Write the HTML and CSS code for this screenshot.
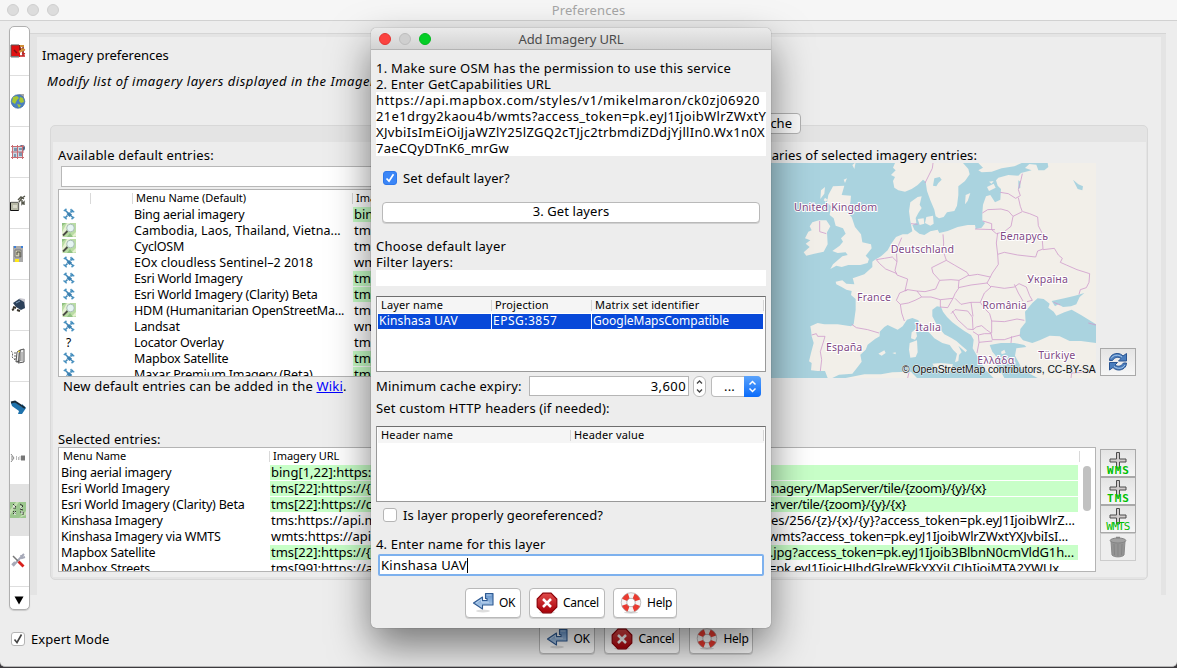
FILE: index.html
```html
<!DOCTYPE html>
<html lang="en">
<head>
<meta charset="utf-8">
<title>Preferences</title>
<link rel="stylesheet" href="styles.css">
</head>
<body>
<svg class="defs" width="0" height="0">
  <defs>
    <linearGradient id="g-blue" x1="0" y1="0" x2="0" y2="1"><stop offset="0" stop-color="#5f8fc8"/><stop offset="1" stop-color="#b9d3ee"/></linearGradient>
    <linearGradient id="g-red" x1="0" y1="0" x2="0" y2="1"><stop offset="0" stop-color="#e04a4a"/><stop offset="1" stop-color="#a80008"/></linearGradient>
    <symbol id="sat" viewBox="0 0 12 12">
      <path d="M2 2l3 3M7 7l3.500 3M2 10l2.500-2.500M7.500 4.500L10 2" stroke="#3f87b8" stroke-width="1.600"/>
      <path d="M.8 3L3.500 .8M8.500 11.200L11.200 9M.5 8.500l3.200 2.700M8 .8L8.300 3.500l3 .3" stroke="#4c94c2" stroke-width="1.500" fill="none"/>
      <path d="M3.500 6l2.500-2 3 2.500-2.500 2.500z" fill="#3a7fb0"/>
    </symbol>
    <symbol id="osm" viewBox="0 0 14 14">
      <path d="M0 0h14v14H0z" fill="#b9dca4"/><path d="M0 9l5-9h3L1 14H0zM9 14l5-5v4z" fill="#e6f1d2"/><path d="M0 3l4-3H0zM5 14l3-4 3 4z" fill="#8fc081"/>
      <path d="M1 12.500l4.500-4.500" stroke="#4b4b44" stroke-width="1.800"/><circle cx="8.500" cy="5" r="3.800" fill="#e6f5f3" stroke="#a9bdb7" stroke-width="1"/>
    </symbol>
    <symbol id="ok" viewBox="0 0 22 22">
      <ellipse cx="11" cy="19" rx="7" ry="1.500" fill="#000" opacity=".13"/>
      <path d="M13.500 1.500h7.500V13H10.500v4L1.500 11l9-6v3.500H15V6.500h-1.500z" fill="url(#g-blue)" stroke="#2f5a92" stroke-width="1.100" stroke-linejoin="round"/>
      <path d="M14.500 3h5M4 11l5.500-3.800v3H17" fill="none" stroke="#c7dcf2" stroke-width=".8"/>
    </symbol>
    <symbol id="cancel" viewBox="0 0 22 22">
      <ellipse cx="11" cy="20.500" rx="8" ry="1.200" fill="#000" opacity=".15"/>
      <path d="M7 1.200h8L20.800 7v8L15 20.800H7L1.200 15V7z" fill="url(#g-red)" stroke="#8d0008" stroke-width="1.200"/>
      <path d="M7 7l8 8M15 7l-8 8" stroke="#fff" stroke-width="2.500"/>
    </symbol>
    <symbol id="help" viewBox="0 0 22 22">
      <ellipse cx="11" cy="20.500" rx="7" ry="1.200" fill="#000" opacity=".15"/>
      <circle cx="11" cy="10.500" r="7" fill="none" stroke="#f6f4f4" stroke-width="5.600"/>
      <circle cx="11" cy="10.500" r="7" fill="none" stroke="#ea3a30" stroke-width="5.600" stroke-dasharray="6 4.995" stroke-dashoffset="-2.500"/>
      <circle cx="11" cy="10.500" r="9.800" fill="none" stroke="#aaa5a5" stroke-width=".7"/><circle cx="11" cy="10.500" r="4.200" fill="none" stroke="#a09a9a" stroke-width=".7"/>
    </symbol>
    <symbol id="plus" viewBox="0 0 18 17"><path d="M7.500 .5h3v6.500h6.500v3h-6.500V16h-3v-6H1V7h6.500z" fill="#d0cccc" stroke="#4c4c4c"/></symbol>
  </defs>
</svg>

<div class="window">
  <header class="titlebar"><span class="lights"><i></i><i></i><i></i></span>Preferences</header>

  <main class="main">
    <nav class="side">
      <div class="tab first"><svg width="16" height="16" viewBox="0 0 16 16"><path d="M1 2h9v12H1z" fill="#e01010"/><path d="M1 14V2h8" fill="none" stroke="#555"/><path d="M1 13h8v1.500H1z" fill="#777"/><path d="M4 7l3 3M10 2v5l3-2v8" stroke="#7a1010" stroke-width="1.500" fill="none"/><path d="M10 3h4M11 6l4 1M9 9l4-2" stroke="#d09038" stroke-width="2"/><path d="M10 13h5M12 10l3 1" stroke="#cc2020" stroke-width="1.500"/></svg></div>
      <div class="tab"><svg width="16" height="16" viewBox="0 0 16 16"><path d="M8 1h6v5z" fill="#aaa"/><circle cx="8" cy="8.500" r="6.800" fill="#4a80c0" stroke="#356299" stroke-width=".6"/><path d="M3 4l4-1 2 2-2 2-2 4-3-2zM10 4l3 1 1 4-3 1-2-2zM7 11l4 1-2 3z" fill="#a8c832"/></svg></div>
      <div class="tab"><svg width="16" height="16" viewBox="0 0 16 16"><circle cx="12" cy="4" r="3" fill="#516684"/><path d="M2 2h11v12H2z" fill="#c9d8e4"/><path d="M4 4h3v3H4zM9 8h3v4H9zM9 4h3v2H9zM4 10h2v3H4z" fill="#7d97ae"/><path d="M1 2.500h13M1 8h13M1 13.500h13M2.500 1v14M7.500 1v14M12.500 1v14" stroke="#c96c72" stroke-width="1"/></svg></div>
      <div class="tab"><svg width="16" height="16" viewBox="0 0 16 16"><path d="M.5 7.500h8v8h-8z" fill="#b7b9a6" stroke="#111"/><path d="M1 7h8v8" stroke="#c8c8c0" fill="none"/><path d="M3 10h4v3H3z" fill="#d8d8c9"/><path d="M8 5l3-3 3 2M9 7l3-4 3-2M12 5v4l2-2v3" stroke="#55564a" stroke-width="1.400" fill="none"/></svg></div>
      <div class="tab"><svg width="16" height="16" viewBox="0 0 16 16"><path d="M3 0h10v16H3z" fill="#aaa"/><path d="M4 0h2v2H4zM11 0h2v2h-2z" fill="#3c7fd8"/><path d="M5 4h6v7H5z" fill="#d2cfb4" stroke="#777"/><path d="M7 9V6h3v5" fill="none" stroke="#4a4a40"/><path d="M5 13h4v3H5z" fill="#ffe818"/></svg></div>
      <div class="tab"><svg width="16" height="16" viewBox="0 0 16 16"><path d="M9 1l6 1v10z" fill="#c5c5cd"/><path d="M3 6l6-4 5 3 1 6-4 2-5-3z" fill="#2b4059"/><path d="M6 6l4-2" stroke="#7f9dbc"/><path d="M3 10l3 1M7 13l3 1M2 13l2-1" stroke="#37332a" stroke-width="2"/></svg></div>
      <div class="tab"><svg width="16" height="16" viewBox="0 0 16 16"><path d="M1 3c2 1 2 4 1 6l3 3M5 4v8" stroke="#666" fill="none" stroke-dasharray="2 1"/><path d="M7 4l3-2v11l-4 1zM10 2l4-1v13l-6 1z" fill="#eee" stroke="#444" stroke-width=".9"/><path d="M12 4v9M9 5v7" stroke="#888"/><path d="M8 3.500h2" stroke="#d7c440" stroke-width="1.500"/></svg></div>
      <div class="tab joined"><svg width="16" height="16" viewBox="0 0 16 16"><path d="M1 4l4-1 7 5 0-3 4 4-4 6-4 0 1-3-7-5z" fill="#1f72ac"/><path d="M1 3.500l4-1 10 6.500" stroke="#152a3a" stroke-width="2" fill="none"/></svg></div>
      <div class="tab joined"><svg width="16" height="16" viewBox="0 0 16 16"><path d="M1 4l3 4-3 4M2 6v4" stroke="#888" fill="none"/><path d="M6.500 6v4M8.500 7v3M10 6v4" stroke="#bbb"/><path d="M11 5.500h4v5h-4z" fill="#777"/></svg></div>
      <div class="tab selected"><svg width="16" height="16" viewBox="0 0 16 16"><path d="M0 0h16v16H0z" fill="#9cc78e"/><path d="M0 8l6-8h3L0 13zM9 16l7-7v4z" fill="#c4dfb2"/><path d="M3 2l3 3M3 6h3M3 9l3 3M6 9l-3 3M10 2l3 2-3 3 3 1M10 10h3v3" stroke="#333" fill="none"/><path d="M4 3v3M5 10v3M11 4v3M12 9v3" stroke="#fff"/></svg></div>
      <div class="tab last"><svg width="16" height="16" viewBox="0 0 16 16"><path d="M3 13L12 3l2-2M2 12l3-3M11 2l1 3 3-1" stroke="#a6a9b8" stroke-width="2" fill="none"/><path d="M3 3l5 5" stroke="#777" stroke-width="1.500"/><path d="M8.500 8.500l5 5" stroke="#d8201c" stroke-width="2.800"/></svg></div>
      <div class="more"><svg width="10" height="9" viewBox="0 0 10 9"><path d="M.5 .5h9L5 8.500z" fill="#000"/></svg></div>
    </nav>

    <section class="pane">
      <h1>Imagery preferences</h1>
      <p class="lead">Modify list of imagery layers displayed in the Imagery menu</p>
      <div class="inner">
        <span class="subtab">Cache</span>
        <div class="sheet">
          <div class="top">
            <div class="defaults">
              <div class="label">Available default entries:</div>
              <div class="filter"></div>
              <div class="list">
                <div class="lhead"><span></span><span></span><span>Menu Name (Default)</span><span>Imagery URL</span></div>
                <div class="lrow"><svg class="s"><use href="#sat"/></svg><b>Bing aerial imagery</b><em class="hit">bing[1,22]</em></div>
                <div class="lrow"><svg class="m"><use href="#osm"/></svg><b class="w1">Cambodia, Laos, Thailand, Vietna...</b><em>tms:https</em></div>
                <div class="lrow"><svg class="m"><use href="#osm"/></svg><b>CyclOSM</b><em>tms:https</em></div>
                <div class="lrow"><svg class="s"><use href="#sat"/></svg><b class="w1">EOx cloudless Sentinel–2 2018</b><em>wms:https</em></div>
                <div class="lrow"><svg class="s"><use href="#sat"/></svg><b>Esri World Imagery</b><em class="hit">tms[22]</em></div>
                <div class="lrow"><svg class="s"><use href="#sat"/></svg><b>Esri World Imagery (Clarity) Beta</b><em class="hit">tms[22]</em></div>
                <div class="lrow"><svg class="m"><use href="#osm"/></svg><b>HDM (Humanitarian OpenStreetMa...</b><em>tms:https</em></div>
                <div class="lrow"><svg class="s"><use href="#sat"/></svg><b class="w2">Landsat</b><em>wms:https</em></div>
                <div class="lrow"><i class="q">?</i><b>Locator Overlay</b><em>tms:https</em></div>
                <div class="lrow"><svg class="s"><use href="#sat"/></svg><b>Mapbox Satellite</b><em class="hit">tms[22]</em></div>
                <div class="lrow"><svg class="s"><use href="#sat"/></svg><b>Maxar Premium Imagery (Beta)</b><em class="hit">tms[22]</em></div>
              </div>
              <div class="note">New default entries can be added in the <a>Wiki</a>.</div>
            </div>
            <div class="mapcol">
              <div class="label bounds">Boundaries of selected imagery entries:</div>
              <svg class="map" viewBox="0 0 975 645">
                <path d="M0 0h975v645H0z" fill="#aad3df"/>
                <g fill="#f2efe9">
                  <path d="M830 0 832 12 820 22 802 22 796 5 775 3 762 15 782 22 750 30 742 38 712 36 682 44 675 52 680 68 690 78 688 110 672 118 658 96 645 100 636 125 634 150 634 172 642 180 632 194 614 198 612 186 590 186 560 192 530 204 505 210 500 200 478 205 460 216 445 212 430 200 424 186 436 180 434 165 442 150 452 135 446 125 452 100 440 102 418 118 414 145 418 175 424 205 410 214 395 214 375 222 362 240 350 262 330 280 312 290 304 296 304 312 280 334 245 346 240 332 246 348 250 364 226 362 214 352 194 356 196 364 212 372 226 380 242 384 240 396 254 408 254 440 248 484 240 490 200 484 160 484 140 480 118 490 120 500 122 520 128 540 120 570 114 595 122 600 120 622 140 624 162 624 170 645 184 645 204 635 244 632 260 612 272 596 268 575 284 560 290 545 312 528 326 520 326 506 340 492 350 486 380 500 395 490 408 470 424 465 442 472 450 488 462 498 478 512 490 526 514 540 536 546 546 560 558 572 552 598 562 594 564 576 572 568 566 556 562 548 584 568 588 562 572 548 556 534 540 524 520 514 500 490 484 460 484 440 498 430 510 432 516 446 528 462 544 478 560 490 580 504 600 516 608 530 605 556 618 578 632 600 640 618 668 645 975 645 975 0z"/>
                  <path d="M372 0 366 14 374 22 360 36 372 42 366 54 370 74 382 82 402 86 422 78 440 66 456 50 464 56 468 84 478 112 490 140 494 160 504 166 518 162 528 148 550 144 558 128 562 96 562 70 582 54 596 34 592 18 576 0zM622 0 636 14 622 22 632 28 662 26 692 16 730 10 752 0z"/>
                  <path d="M186 70 220 68 212 96 240 98 238 120 226 146 242 162 252 192 270 214 274 238 300 244 302 256 284 278 294 288 290 300 268 306 232 306 212 312 196 308 178 318 186 304 214 280 230 276 224 268 200 270 184 264 206 248 216 236 210 226 224 212 216 196 194 188 188 166 176 156 180 130 168 118 172 96zM124 178 144 172 166 172 178 190 168 208 170 244 158 266 130 272 106 278 98 268 116 252 104 242 118 232 102 226 112 206 122 202 116 190zM150 82 162 72 160 92 148 108zM162 104l8 6-6 6-6-4zM218 50l10-4-6 14zM244 6l10-8-4 20z"/>
                  <path d="M466 162 486 158 488 182 478 188 462 180zM440 168 458 166 460 182 446 186zM584 96 598 90 590 114 582 124zM648 72 668 62 674 74 654 84zM654 56 668 54 662 62z"/>
                  <path d="M422 508 434 498 438 520 432 530 420 526zM416 540 438 532 440 568 434 582 418 584 414 560zM322 572 340 562 344 570 332 578zM364 570 374 568 374 574zM484 602 510 600 546 604 540 622 530 632 494 618zM224 645 280 634 330 634 364 628 420 626 438 645z"/>
                </g>
                <g fill="#aad3df">
                  <path d="M748 498 764 478 762 446 784 420 800 406 818 408 836 422 832 434 848 446 856 458 880 448 902 440 930 456 975 484 975 540 930 534 896 534 866 520 836 518 806 532 784 540 756 532 746 520zM842 414 880 406 912 398 940 390 926 402 916 424 900 430 876 432 862 424 852 430z"/>
                  <path d="M656 546 690 540 730 540 760 546 766 552 736 556 732 578 744 600 752 618 776 632 800 645 700 645 686 618 668 596 684 590 664 566z"/>
                  <path d="M490 46 506 42 512 50 502 60 496 70 486 68zM906 50 922 64 936 70 934 82 920 78zM742 52 748 56 748 74 742 78z"/>
                </g>
                <g fill="#f2efe9"><path d="M690 566l10-6 4 10-12 4zM712 590l10-2 2 8-10 2zM690 606l8 2-4 8zM744 612l8 4-6 4z"/></g>
                <g fill="none" stroke="#cf9bcb" stroke-width="2.400" stroke-linejoin="round">
                  <path d="M486 0 484 16 474 36 462 60M688 88 712 92 734 106 748 98 742 80 750 50 754 32M742 104 748 130 754 146 726 160 712 144 690 138 650 140 634 150M726 160 720 190 700 206 676 212 662 200 662 182 636 174M612 198 672 200M756 146 776 152 800 162 802 188 812 208 816 258 800 264 794 282 740 276 700 268 680 274 676 240 680 210M816 260 850 256 862 276 874 286 868 298 886 306 918 320 956 332 954 358 946 374 928 380 924 394M680 274 682 304 664 330 658 342M516 214 518 240 516 262 526 292 482 314 486 330 506 352M526 292 550 306 588 328 594 338 620 334 658 342 648 360 600 366 562 374 564 352 594 336M506 352 540 350 564 352M506 352 494 378 462 386 438 384 410 380 402 384 410 348 378 336 372 322 378 296 376 262 392 224M420 182 440 184M316 290 340 286 364 282 378 296M316 290 326 302 344 318 378 332M410 380 386 390 376 412 388 424 412 420 432 412 452 402 438 384M388 424 392 450 400 474M452 402 480 402 508 410 546 406 552 392 564 374M552 406 570 424 600 418 628 418 640 390 660 372 648 360M660 370 700 376 730 372 744 362 766 372 776 398 784 412 768 416M730 364 742 390 756 414M508 410 508 432 530 434 546 406M544 444 560 470 590 498 606 500 604 462 590 444 552 440 540 452M600 418 606 460M628 418 640 436 656 452 662 474 700 476 738 468 760 472M606 500 616 492 632 488 646 500 660 510 664 530 700 530 724 522 748 516M622 516 640 512 660 512M622 516 624 538 664 534M606 506 622 516M624 538 618 570M722 520 720 540M662 474 662 510"/>
                  <path d="M242 484 256 494 290 500 324 510M122 516 136 512 140 520 162 520 158 534 148 566 152 590 148 624M146 174 146 206 166 212M952 480 975 486M900 645 902 630 975 624M414 628 410 645M848 418l20 8"/>
                </g>
                <g class="places">
                  <text x="69" y="143" textLength="250">United Kingdom</text>
                  <text x="359" y="269" textLength="190">Deutschland</text>
                  <text x="687" y="232" textLength="144">Беларусь</text>
                  <text x="769" y="360" textLength="122">Україна</text>
                  <text x="258" y="413" textLength="102">France</text>
                  <text x="634" y="438" textLength="133">România</text>
                  <text x="433" y="504" textLength="77">Italia</text>
                  <text x="165" y="563" textLength="109">España</text>
                  <text x="619" y="604" textLength="111">Ελλάδα</text>
                  <text x="802" y="588" textLength="111">Türkiye</text>
                </g>
                <text class="credit" x="393" y="629" textLength="581">© OpenStreetMap contributors, CC-BY-SA</text>
              </svg>
            </div>
            <span class="ibtn refresh"><svg width="20" height="20" viewBox="0 0 20 20"><g fill="#4a7dbd" stroke="#2a5592" stroke-linejoin="round"><path d="M1.500 8.500C1.500 4 5.500 1.500 9 1.500c3 0 4.500 1 6 2.500l3.500-2.500v7.500h-8l2.500-2.500C10.500 4.500 7 4.800 4.500 8.500z"/><path d="M18.500 11c0 4.500-4 7-7.500 7-3 0-4.500-1-6-2.500L1.500 18v-7.500h8L7 13c2.500 2 6 1.700 8.500-2z"/></g><path d="M3 6.500C5 3 10 2 14 5M17 13c-2 3.500-7 4.500-11 1.500" stroke="#a9c9ea" fill="none"/></svg></span>
          </div>

          <div class="label chosen">Selected entries:</div>
          <div class="bottom">
            <div class="list sel">
              <div class="shead"><span>Menu Name</span><span>Imagery URL</span><span></span></div>
              <div class="srows">
                <div class="srow"><b>Bing aerial imagery</b><em class="hit">bing[1,22]:https:/</em></div>
                <div class="srow"><b>Esri World Imagery</b><em class="hit">tms[22]:https://{s<u class="e1">ArcGIS/rest/services/World_Imagery/MapServer/tile/{zoom}/{y}/{x}</u></em></div>
                <div class="srow"><b>Esri World Imagery (Clarity) Beta</b><em class="hit">tms[22]:https://cl<u class="e2">World_Imagery/MapServer/tile/{zoom}/{y}/{x}</u></em></div>
                <div class="srow"><b>Kinshasa Imagery</b><em>tms:https://api.ma<u class="e3">tiles/256/{z}/{x}/{y}?access_token=pk.eyJ1IjoibWlrZ...</u></em></div>
                <div class="srow"><b>Kinshasa Imagery via WMTS</b><em>wmts:https://api.<u class="e4">/wmts?access_token=pk.eyJ1IjoibWlrZWxtYXJvbiIsI...</u></em></div>
                <div class="srow"><b>Mapbox Satellite</b><em class="hit">tms[22]:https://{s<u class="e5">.jpg?access_token=pk.eyJ1Ijoib3BlbnN0cmVldG1h...</u></em></div>
                <div class="srow"><b>Mapbox Streets</b><em>tms[99]:https://a<u class="e6">token=pk.eyJ1IjoicHJhdGlreWFkYXYiLCJhIjoiMTA2YWUx</u></em></div>
                <span class="thumb"></span>
              </div>
            </div>
            <div class="tools">
              <span class="ibtn"><svg class="plus"><use href="#plus"/></svg><i>WMS</i></span>
              <span class="ibtn"><svg class="plus"><use href="#plus"/></svg><i>TMS</i></span>
              <span class="ibtn"><svg class="plus"><use href="#plus"/></svg><i class="thin">WMTS</i></span>
              <span class="ibtn off"><svg width="18" height="22" viewBox="0 0 18 22"><path d="M2 5l1 14c2 2.500 10 2.500 12 0l1-14z" fill="#949494" stroke="#8a8a8a"/><ellipse cx="9" cy="4.500" rx="7.800" ry="2.500" fill="#a2a2a2" stroke="#858585"/><path d="M7 1.500h4" stroke="#858585" stroke-width="1.500"/><path d="M5 8l.5 11M9 8v12M13 8l-.5 11" stroke="#858585"/></svg></span>
            </div>
          </div>
        </div>
      </div>
    </section>
  </main>

  <footer class="foot">
    <label class="expert"><span class="box"><svg width="12" height="12" viewBox="0 0 12 12"><path d="M2.500 6.500L5 9.500l4.500-8" fill="none" stroke="#444" stroke-width="1.600"/></svg></span>Expert Mode</label>
    <div class="actions back">
      <button class="b-ok"><svg><use href="#ok"/></svg>OK</button>
      <button class="b-cancel"><svg><use href="#cancel"/></svg>Cancel</button>
      <button class="b-help"><svg><use href="#help"/></svg>Help</button>
    </div>
  </footer>
</div>

<div class="dialog">
  <header class="dtitle"><span class="lights"><i></i><i></i><i></i></span>Add Imagery URL</header>
  <div class="dbody">
    <p>1. Make sure OSM has the permission to use this service</p>
    <p class="wider">2. Enter GetCapabilities URL</p>
    <div class="url"><span class="u1">https://api.mapbox.com/styles/v1/mikelmaron/ck0zj06920</span><span class="u2">21e1drgy2kaou4b/wmts?access_token=pk.eyJ1IjoibWlrZWxtY</span><span class="u3">XJvbiIsImEiOiJjaWZlY25lZGQ2cTJjc2trbmdiZDdjYjllIn0.Wx1n0X</span><span class="u4">7aeCQyDTnK6_mrGw</span></div>
    <label class="check"><span class="box on"><svg width="12" height="12" viewBox="0 0 12 12"><path d="M2.500 6.500L5 9.200l4.500-7" fill="none" stroke="#fff" stroke-width="1.700"/></svg></span>Set default layer?</label>
    <button class="wide">3. Get layers</button>
    <p>Choose default layer</p>
    <p>Filter layers:</p>
    <div class="plain"></div>
    <div class="dtable layers">
      <div class="dhead"><span>Layer name</span><span>Projection</span><span>Matrix set identifier</span></div>
      <div class="drow"><span>Kinshasa UAV</span><span class="epsg">EPSG:3857</span><span class="gmc">GoogleMapsCompatible</span></div>
    </div>
    <div class="expiry"><span>Minimum cache expiry:</span><span class="num">3,600</span>
      <span class="spin"><svg width="11" height="19" viewBox="0 0 11 19"><path d="M3 6.500L5.500 4 8 6.500M3 12.500L5.500 15 8 12.500" fill="none" stroke="#444" stroke-width="1.300"/></svg></span>
      <span class="combo"><span>...</span><svg width="17" height="21" viewBox="0 0 17 21"><path d="M5.500 8.500l3-3 3 3M5.500 12.500l3 3 3-3" fill="none" stroke="#fff" stroke-width="1.500"/></svg></span>
    </div>
    <p class="snug">Set custom HTTP headers (if needed):</p>
    <div class="dtable headers">
      <div class="dhead"><span>Header name</span><span>Header value</span></div>
    </div>
    <label class="check geo"><span class="box"></span>Is layer properly georeferenced?</label>
    <p class="snug">4. Enter name for this layer</p>
    <div class="name">Kinshasa UAV<i class="caret"></i></div>
    <div class="actions">
      <button class="b-ok"><svg><use href="#ok"/></svg>OK</button>
      <button class="b-cancel"><svg><use href="#cancel"/></svg>Cancel</button>
      <button class="b-help"><svg><use href="#help"/></svg>Help</button>
    </div>
  </div>
</div>
</body>
</html>
```
FILE: styles.css
```css
* { box-sizing: border-box; }
body {
  margin: 0;
  width: 1177px;
  height: 668px;
  overflow: hidden;
  position: relative;
  background: #3c3a3e;
  color: #000;
  font: 13px/16px "Noto Sans", "Open Sans", sans-serif;
  white-space: nowrap;
}
.defs { position: absolute; }
p, h1 { margin: 0; font: inherit; }
b, em, i, u { font-weight: 400; font-style: normal; text-decoration: none; }
svg { display: block; flex: none; }

.window {
  width: 1177px;
  height: 667px;
  display: flex;
  flex-direction: column;
  background: #ededed;
  border-radius: 0 0 5px 5px;
  border-bottom: 1px solid #b5b5b5;
}
.titlebar {
  flex: none;
  height: 21px;
  display: flex;
  align-items: center;
  justify-content: center;
  position: relative;
  background: #f6f6f6;
  border-bottom: 1px solid #d1d1d1;
  color: #a6a6a6;
  letter-spacing: .1px;
}
.lights { position: absolute; left: 7px; top: 4px; display: flex; gap: 8px; }
.lights i { width: 12px; height: 12px; border-radius: 50%; background: #dcdcdc; border: 1px solid #cfcfcf; }

.main { display: flex; flex: none; height: 589px; padding: 5px 0 0 9px; }
.side {
  width: 21px;
  height: 584px;
  background: #fff;
  border: 1px solid #b0b0b0;
  border-radius: 5px;
  overflow: hidden;
  display: flex;
  flex-direction: column;
  box-shadow: 0 1px 1px rgba(0,0,0,.15);
}
.tab { height: 51px; flex: none; display: flex; align-items: center; border-bottom: 1px solid #dedede; }
.tab.first { height: 49px; }
.tab.joined { border-bottom-color: #fff; }
.tab.selected { height: 52px; background: #e2e2e2; border: 0; }
.tab.last { height: 51px; }
.more { flex: 1; display: flex; align-items: center; justify-content: center; padding: 4px 2px 0 0; }

.pane {
  width: 1136px;
  height: 561px;
  margin-top: 8px;
  border: solid #e4e4e4;
  border-width: 3px 5px 0 7px;
  box-shadow: 0 -1px #d5d5d5;
}
.pane h1 { margin: 10px 0 0 5px; letter-spacing: -.02px; }
.lead { margin: 10px 0 0 10px; font-style: italic; letter-spacing: .5px; }
.inner {
  position: relative;
  margin: 36px 0 0 13px;
  width: 1098px;
  height: 455px;
  padding: 16px 1px 2px 2px;
  background: #e4e4e4;
  border: 1px solid #d8d8d8;
  border-radius: 5px;
}
.subtab {
  position: absolute;
  right: 346px;
  top: -13px;
  width: 90px;
  height: 21px;
  padding-right: 8px;
  line-height: 19px;
  text-align: right;
  background: #fbfbfb;
  border: 1px solid #b3b3b3;
  border-radius: 4px;
}
.sheet { height: 435px; background: #ededed; padding: 5px 0 0 5px; }
.label { height: 16px; letter-spacing: .2px; }
.top { display: flex; height: 284px; }
.defaults { width: 640px; }
.filter { height: 21px; margin: 3px 0 0 3px; background: #fff; border: 1px solid #b8b8b8; }
.list { background: #fff; border: 1px solid #b4b4b4; overflow: hidden; }
.defaults .list { height: 188px; margin-top: 2px; }
.lhead { display: grid; grid-template-columns: 32px 42px 220px 1fr; height: 17px; padding-top: 1px; font-size: 11px; line-height: 14px; letter-spacing: -.05px; }
.lhead span { border-right: 1px solid #d9d9d9; height: 11px; margin-top: 2px; line-height: 9px; padding-left: 3px; }
.lrow { display: grid; grid-template-columns: 75px 219px 1fr; height: 16px; line-height: 15px; }
.lrow svg.s { width: 12px; height: 12px; margin: 1px 0 0 4px; }
.lrow svg.m { width: 14px; height: 14px; margin: 0 0 0 3px; }
.q { font-size: 12px; padding-left: 7px; }
em { padding-left: 1px; height: 15px; }
.hit { background: #c8ffc8; }
.lrow b, .srow b { font-size: 12.500px; letter-spacing: -.2px; }
.lrow .w1 { letter-spacing: .07px; }
.lrow .w2 { letter-spacing: -.1px; }
.note { margin: 1px 0 0 5px; letter-spacing: .17px; }
.note a { color: #00f; text-decoration: underline; }
.mapcol { width: 398px; }
.bounds { text-align: right; padding-right: 119px; letter-spacing: .1px; }
.map { width: 325px; height: 215px; margin-left: 73px; }
.places text { font: 32px "Noto Sans", sans-serif; fill: #7f4a86; stroke: #fff; stroke-width: 6px; paint-order: stroke; }
.credit { font: 31px "Liberation Sans", sans-serif; fill: #111; stroke: #e8eef0; stroke-width: 3px; paint-order: stroke; }
.ibtn {
  width: 36px;
  height: 28px;
  display: flex;
  flex-direction: column;
  align-items: center;
  justify-content: center;
  background: linear-gradient(#e4e4e4, #f6f6f6);
  border: 1px solid #a9a9a9;
}
.refresh { margin: 201px 0 0 4px; }
.chosen { letter-spacing: .12px; }
.bottom { display: flex; }
.sel { width: 1038px; height: 125px; }
.shead { display: grid; grid-template-columns: 211px 810px 1fr; height: 17px; font-size: 11px; letter-spacing: -.05px; }
.shead span { border-right: 1px solid #d9d9d9; height: 11px; margin-top: 3px; line-height: 9px; padding-left: 4px; }
.shead span + span { padding-left: 3px; }
.shead span:last-child { border: 0; }
.srows { position: relative; }
.srow { display: grid; grid-template-columns: 211px 808px; height: 16px; line-height: 15px; }
.srow b { padding-left: 2px; }
.srow em { display: flex; justify-content: space-between; }
.e1 { padding-right: 92px; letter-spacing: -.4px; }
.e2 { padding-right: 172px; letter-spacing: -.35px; }
.e3 { padding-right: 3px; letter-spacing: -.05px; }
.e4 { padding-right: 10px; letter-spacing: -.22px; }
.e5 { padding-right: 4px; letter-spacing: -.16px; }
.e6 { padding-right: 19px; letter-spacing: -.15px; }
.thumb { position: absolute; left: 1024px; top: 1px; width: 8px; height: 45px; border-radius: 4px; background: #c1c1c1; }
.tools { margin: 2px 0 0 4px; }
.tools .ibtn { justify-content: flex-start; padding-top: 2px; }
.plus { width: 18px; height: 17px; }
.tools i { margin-top: -4px; font: 700 11px/11px "DejaVu Sans Mono", monospace; letter-spacing: 1px; color: #00c000; padding-left: 1px; }
.tools i.thin { font-weight: 400; letter-spacing: -.8px; padding: 0; }
.tools .off { border-color: #ccc; background: #eee; }

.foot { display: flex; height: 56px; }
.expert { display: flex; gap: 6px; height: 16px; margin: 21px 0 0 11px; letter-spacing: .05px; }
.box { width: 14px; height: 14px; border: 1px solid #b5b5b5; border-radius: 3px; background: #fff; flex: none; margin-top: 1px; }
.box.on { background: #3b86f7; border-color: #2f78ea; }
.actions { display: flex; gap: 8px; }
.back { margin: 14px 0 0 430px; gap: 9px; }
button { font: inherit; color: #000; background: #fff; border: 1px solid #b9b9b9; border-radius: 4px; padding: 0; box-shadow: 0 1px 0 rgba(0,0,0,.12); }
.actions button { height: 30px; display: flex; align-items: center; font-size: 12px; letter-spacing: -.25px; gap: 5px; padding-left: 6px; }
.actions svg { width: 22px; height: 22px; }
.b-ok { width: 56px; } .b-cancel { width: 76px; } .b-help { width: 64px; }

.dialog {
  position: absolute;
  left: 371px;
  top: 28px;
  width: 400px;
  height: 600px;
  background: #ededed;
  border-radius: 5px;
  box-shadow: 0 0 1px rgba(0,0,0,.6), 0 18px 40px rgba(0,0,0,.5);
}
.dtitle {
  position: relative;
  height: 22px;
  line-height: 22px;
  text-align: center;
  color: #4b4b4b;
  letter-spacing: -.1px;
  background: linear-gradient(#eaeaea, #d2d2d2);
  border-bottom: 1px solid #b3b3b3;
  border-radius: 5px 5px 0 0;
}
.dtitle .lights { left: 8px; top: 5px; }
.dtitle .lights i:first-child { background: #fc4340; border-color: #e33531; }
.dtitle .lights i:nth-child(2) { background: #cfcfcf; border-color: #bdbdbd; }
.dtitle .lights i:last-child { background: #04ce26; border-color: #03b820; }
.dbody { padding: 10px 5px 0; }
.dbody p { letter-spacing: .23px; }
.dbody p.snug { letter-spacing: .15px; }
.dbody p.wider { letter-spacing: .18px; }
.url { height: 64px; background: #fff; }
.url span { display: block; }
.u1 { letter-spacing: .53px; }
.u2 { letter-spacing: .35px; }
.u3 { letter-spacing: .32px; }
.u4 { letter-spacing: .25px; }
.check { display: flex; gap: 6px; height: 16px; margin: 14px 0 0 7px; letter-spacing: .12px; }
.wide { display: block; width: 378px; height: 21px; margin: 16px 0 15px 6px; letter-spacing: .1px; line-height: 17px; padding-bottom: 2px; }
.plain { height: 16px; background: #fff; }
.dtable { height: 76px; background: #fff; border: 1px solid #999; border-top-color: #6e6e6e; padding: 0 1px; }
.dhead { display: grid; height: 16px; background: #f5f5f5; font-size: 11px; letter-spacing: .15px; }
.dhead span { border-right: 1px solid #d4d4d4; height: 11px; margin-top: 3px; line-height: 10px; padding-left: 3px; }
.layers { margin-top: 10px; }
.layers .dhead, .drow { grid-template-columns: 114px 100px 172px; }
.drow { display: grid; height: 15px; margin-top: 1px; line-height: 14px; color: #fff; background: #0849d9; font-size: 12px; letter-spacing: .2px; }
.drow span { border-right: 1px solid #fff; padding-left: 1px; }
.drow .epsg { letter-spacing: .5px; }
.drow .gmc { letter-spacing: 0; }
.expiry { display: flex; align-items: center; height: 22px; margin-top: 3px; letter-spacing: .2px; }
.expiry > span:first-child { width: 153px; }
.num { width: 160px; height: 20px; line-height: 19px; background: #fff; border: 1px solid #b5b5b5; text-align: right; padding-right: 2px; letter-spacing: .4px; }
.spin { width: 13px; height: 21px; margin-left: 4px; border: 1px solid #bbb; border-radius: 6px; background: #fff; }
.combo { display: flex; width: 50px; height: 21px; margin-left: 5px; border-radius: 4px; overflow: hidden; background: #fff; box-shadow: inset 0 0 0 1px #bbb; }
.combo span { width: 33px; padding-left: 13px; line-height: 20px; }
.combo svg { background: linear-gradient(#5ba3fb, #0a6bfa); }
.expiry + p { margin-top: 3px; }
.headers { margin-top: 10px; }
.headers .dhead { grid-template-columns: 193px 193px; }
.check.geo { margin: 5px 0 13px 7px; letter-spacing: .08px; }
.name {
  display: flex;
  align-items: center;
  height: 22px;
  margin: 2px 2px 0;
  background: #fff;
  border: 2px solid #7db1ee;
  border-radius: 2px;
  padding-left: 1px;
  letter-spacing: .25px;
}
.caret { width: 1px; height: 15px; background: #000; }
.dialog .actions { margin: 12px 0 0 89px; }
```
